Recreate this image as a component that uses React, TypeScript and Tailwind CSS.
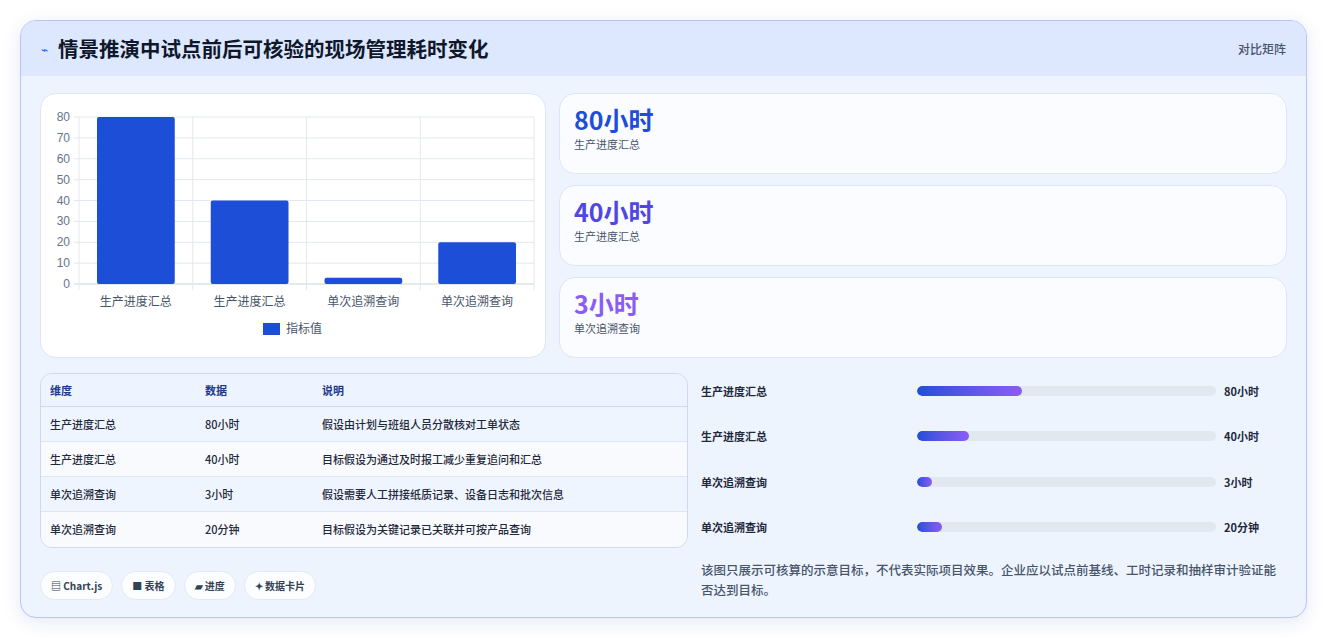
import React from "react";

const F = { fontFamily: '"Noto Sans CJK SC","Noto Sans",sans-serif' };

function Chart() {
  const x0 = 38, x1 = 493, yTop = 23, yBot = 190;
  const vals = [80, 40, 3, 20];
  const labels = ["生产进度汇总", "生产进度汇总", "单次追溯查询", "单次追溯查询"];
  const cw = (x1 - x0) / 4;
  return (
    <svg width="505" height="264" className="block">
      {[0, 10, 20, 30, 40, 50, 60, 70, 80].map((v) => {
        const y = yBot - (v / 80) * (yBot - yTop);
        return (
          <g key={v}>
            <line x1={x0 - 5} x2={x1} y1={y} y2={y} stroke={v === 0 ? "#cbd5e1" : "#e2e8f0"} />
            <text x={x0 - 9} y={y + 4} textAnchor="end" fontSize="12" fill="#64748b" fontFamily="Liberation Sans, sans-serif">{v}</text>
          </g>
        );
      })}
      {[0, 1, 2, 3, 4].map((i) => (
        <line key={i} x1={x0 + i * cw} x2={x0 + i * cw} y1={yTop} y2={yBot + 6} stroke="#e2e8f0" />
      ))}
      {vals.map((v, i) => {
        const h = (v / 80) * (yBot - yTop);
        return <rect key={i} x={x0 + i * cw + 18} y={yBot - h} width={cw - 36} height={h} rx="2" fill="#1d4ed8" />;
      })}
      {labels.map((l, i) => (
        <text key={i} x={x0 + i * cw + cw / 2} y={212} textAnchor="middle" fontSize="12" fill="#475569" fontFamily='"Noto Sans CJK SC",sans-serif'>{l}</text>
      ))}
      <rect x="222" y="229" width="17" height="12" fill="#1d4ed8" />
      <text x="245" y="239" fontSize="12" fill="#475569" fontFamily='"Noto Sans CJK SC",sans-serif'>指标值</text>
    </svg>
  );
}

function Stat({ v, l, c }: { v: string; l: string; c: string }) {
  return (
    <div className="h-[81px] bg-[#fbfcff] border border-[#dde5f5] rounded-2xl px-[14px] pt-[8px]">
      <div className={`text-[25px] font-bold leading-[34px] ${c}`}>{v}</div>
      <div className="text-[11px] text-[#475569]">{l}</div>
    </div>
  );
}

const rows = [
  ["生产进度汇总", "80小时", "假设由计划与班组人员分散核对工单状态"],
  ["生产进度汇总", "40小时", "目标假设为通过及时报工减少重复追问和汇总"],
  ["单次追溯查询", "3小时", "假设需要人工拼接纸质记录、设备日志和批次信息"],
  ["单次追溯查询", "20分钟", "目标假设为关键记录已关联并可按产品查询"],
];
const bars: [string, number, string][] = [
  ["生产进度汇总", 35, "80小时"],
  ["生产进度汇总", 17.5, "40小时"],
  ["单次追溯查询", 5, "3小时"],
  ["单次追溯查询", 8.5, "20分钟"],
];

export default function App() {
  return (
    <div style={F} className="w-[1327px] h-[638px] bg-white pt-[20px] px-[20px]">
      <div className="w-[1287px] h-[598px] rounded-2xl border border-[#b9c6f0] bg-[#eef4fe] overflow-hidden shadow-[0_4px_18px_rgba(30,64,175,0.12)]">
        <div className="h-[55px] bg-[#dde7fd] flex items-center px-[20px] justify-between">
          <div className="flex items-center gap-[10px]">
            <span className="text-[#2563eb] text-[12px]">⌁</span>
            <span className="text-[20.5px] font-bold text-[#0f172a]">情景推演中试点前后可核验的现场管理耗时变化</span>
          </div>
          <span className="text-[12px] font-medium text-[#475569]">对比矩阵</span>
        </div>
        <div className="px-[19px] pt-[17px]">
          <div className="flex gap-[13px]">
            <div className="w-[506px] h-[265px] bg-white rounded-2xl border border-[#dde5f5] overflow-hidden">
              <Chart />
            </div>
            <div className="flex-1 flex flex-col gap-[11px]">
              <Stat v="80小时" l="生产进度汇总" c="text-[#1d4ed8]" />
              <Stat v="40小时" l="生产进度汇总" c="text-[#4f46e5]" />
              <Stat v="3小时" l="单次追溯查询" c="text-[#8b5cf6]" />
            </div>
          </div>
          <div className="flex gap-[13px] mt-[15px]">
            <div className="w-[648px]">
              <div className="rounded-xl border border-[#cfd9ee] overflow-hidden text-[11px] font-medium text-[#1e293b]">
                <div className="h-[33px] flex items-center bg-[#eef4ff] border-b border-[#cfd9ee] font-bold text-[#1e3a8a]">
                  <div className="w-[164px] pl-[9px]">维度</div><div className="w-[117px]">数据</div><div>说明</div>
                </div>
                {rows.map((r, i) => (
                  <div key={i} className={`h-[35px] flex items-center ${i % 2 ? "bg-[#f8fafd]" : "bg-[#eff5fe]"} ${i < 3 ? "border-b border-[#dfe6f3]" : ""}`}>
                    <div className="w-[164px] pl-[9px]">{r[0]}</div><div className="w-[117px]">{r[1]}</div><div>{r[2]}</div>
                  </div>
                ))}
              </div>
              <div className="flex gap-[8px] mt-[23px] text-[10px] font-bold text-[#334155]">
                {["▤ Chart.js", "■ 表格", "▰ 进度", "✦ 数据卡片"].map((t) => (
                  <span key={t} className="h-[29px] px-[10px] flex items-center rounded-full bg-white/80 border border-[#e3e9f4]">{t}</span>
                ))}
              </div>
            </div>
            <div className="flex-1 -mt-[5px]">
              {bars.map(([l, p, v], i) => (
                <div key={i} className="h-[45.5px] flex items-center text-[11px] font-bold text-[#1e293b]">
                  <div className="w-[216px]">{l}</div>
                  <div className="w-[299px] h-[10px] rounded-full bg-[#e2e8f0] overflow-hidden">
                    <div className="h-full rounded-full bg-gradient-to-r from-[#1d4ed8] to-[#8b5cf6]" style={{ width: `${p}%`, minWidth: 10 }} />
                  </div>
                  <div className="ml-[8px]">{v}</div>
                </div>
              ))}
              <p className="text-[12.5px] leading-[20px] font-medium text-[#475569] mt-[10px]">该图只展示可核算的示意目标，不代表实际项目效果。企业应以试点前基线、工时记录和抽样审计验证能否达到目标。</p>
            </div>
          </div>
        </div>
      </div>
    </div>
  );
}
